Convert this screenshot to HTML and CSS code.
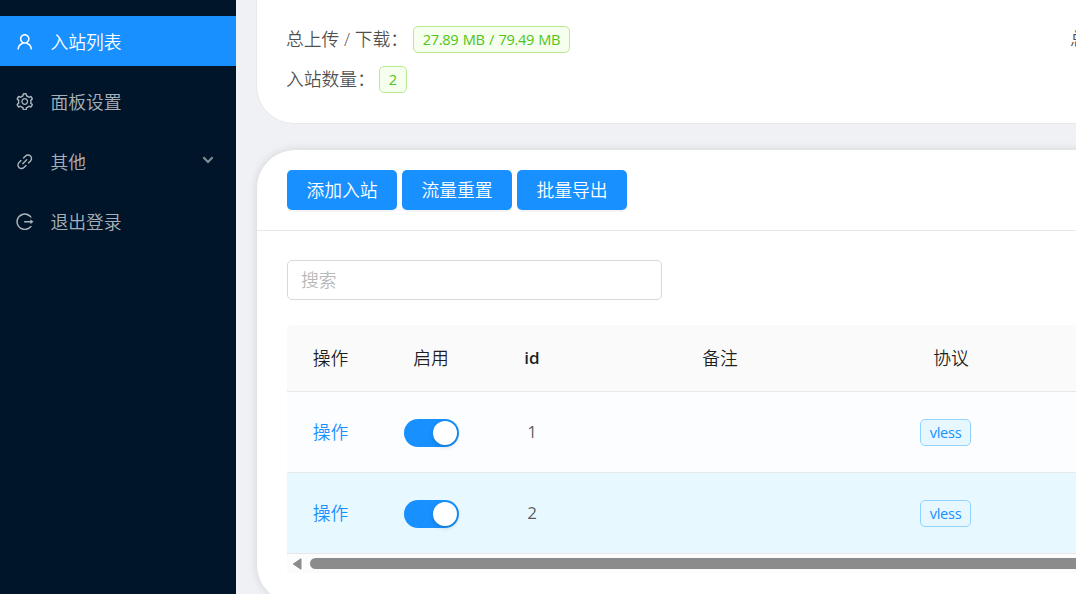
FILE: index.html
```html
<!DOCTYPE html>
<html lang="zh-CN">
<head>
<meta charset="utf-8">
<title>入站列表</title>
<link rel="stylesheet" href="styles.css">
</head>
<body>
<div class="layout">
  <nav class="sidebar">
    <a class="menu-item active">
      <svg class="icon" viewBox="64 64 896 896"><path d="M858.5 763.6a374 374 0 0 0-80.6-119.5 375.63 375.63 0 0 0-119.5-80.6c-.4-.2-.8-.3-1.2-.5C719.5 518 760 444.7 760 362c0-137-111-248-248-248S264 225 264 362c0 82.7 40.5 156 102.8 201.1-.4.2-.8.3-1.2.5-44.8 18.9-85 46-119.5 80.6a375.63 375.63 0 0 0-80.6 119.5A371.7 371.7 0 0 0 136 901.8a8 8 0 0 0 8 8.2h60c4.4 0 7.9-3.5 8-7.8 2-77.2 33-149.5 87.8-204.3 56.7-56.7 132-87.9 212.2-87.9s155.5 31.2 212.2 87.9C779 752.7 810 825 812 902.2c.1 4.4 3.6 7.8 8 7.8h60a8 8 0 0 0 8-8.2c-1-47.8-10.9-94.3-29.5-138.2zM512 534c-45.9 0-89.1-17.9-121.6-50.4S340 407.9 340 362c0-45.9 17.9-89.1 50.4-121.6S466.1 190 512 190s89.1 17.9 121.6 50.4S684 316.1 684 362c0 45.9-17.9 89.1-50.4 121.6S557.9 534 512 534z"/></svg>
      <span>入站列表</span>
    </a>
    <a class="menu-item">
      <svg class="icon" viewBox="64 64 896 896"><path d="M924.8 625.7l-65.5-56c3.1-19 4.7-38.4 4.7-57.8s-1.6-38.8-4.7-57.8l65.5-56a32.03 32.03 0 0 0 9.3-35.2l-.9-2.6a443.74 443.74 0 0 0-79.7-137.9l-1.8-2.1a32.12 32.12 0 0 0-35.1-9.5l-81.3 28.9c-30-24.6-63.5-44-99.7-57.6l-15.7-85a32.05 32.05 0 0 0-25.8-25.7l-2.7-.5c-52.1-9.4-106.9-9.4-159 0l-2.7.5a32.05 32.05 0 0 0-25.8 25.7l-15.8 85.4a351.86 351.86 0 0 0-99 57.4l-81.9-29.1a32 32 0 0 0-35.1 9.5l-1.8 2.1a446.02 446.02 0 0 0-79.7 137.9l-.9 2.6c-4.5 12.5-.8 26.5 9.3 35.2l66.3 56.6c-3.1 18.8-4.6 38-4.6 57.1 0 19.2 1.5 38.4 4.6 57.1L99 625.5a32.03 32.03 0 0 0-9.3 35.2l.9 2.6c18.1 50.4 44.9 96.9 79.7 137.9l1.8 2.1a32.12 32.12 0 0 0 35.1 9.5l81.9-29.1c29.8 24.5 63.1 43.9 99 57.4l15.8 85.4a32.05 32.05 0 0 0 25.8 25.7l2.7.5a449.4 449.4 0 0 0 159 0l2.7-.5a32.05 32.05 0 0 0 25.8-25.7l15.7-85a350 350 0 0 0 99.7-57.6l81.3 28.9a32 32 0 0 0 35.1-9.5l1.8-2.1c34.8-41.1 61.6-87.5 79.7-137.9l.9-2.6c4.5-12.3.8-26.3-9.3-35zM788.3 465.9c2.5 15.1 3.8 30.6 3.8 46.1s-1.3 31-3.8 46.1l-6.6 40.1 74.7 63.9a370.03 370.03 0 0 1-42.6 73.6L721 702.8l-31.4 25.8c-23.9 19.6-50.5 35-79.3 45.8l-38.1 14.3-17.9 97a377.5 377.5 0 0 1-85 0l-17.9-97.2-37.8-14.5c-28.5-10.8-55-26.2-78.7-45.7l-31.4-25.9-93.4 33.2c-17-22.9-31.2-47.6-42.6-73.6l75.5-64.5-6.5-40c-2.4-14.9-3.7-30.3-3.7-45.5 0-15.3 1.2-30.6 3.7-45.5l6.5-40-75.5-64.5c11.3-26.1 25.6-50.7 42.6-73.6l93.4 33.2 31.4-25.9c23.7-19.5 50.2-34.9 78.7-45.7l37.9-14.3 17.9-97.2c28.1-3.2 56.8-3.2 85 0l17.9 97 38.1 14.3c28.7 10.8 55.4 26.2 79.3 45.8l31.4 25.8 92.8-32.9c17 22.9 31.2 47.6 42.6 73.6L781.8 426l6.5 39.9zM512 326c-97.2 0-176 78.8-176 176s78.8 176 176 176 176-78.8 176-176-78.8-176-176-176zm79.2 255.2A111.6 111.6 0 0 1 512 614c-29.9 0-58-11.7-79.2-32.8A111.6 111.6 0 0 1 400 502c0-29.9 11.7-58 32.8-79.2C454 401.6 482.1 390 512 390c29.9 0 58 11.6 79.2 32.8A111.6 111.6 0 0 1 624 502c0 29.9-11.7 58-32.8 79.2z"/></svg>
      <span>面板设置</span>
    </a>
    <a class="menu-item">
      <svg class="icon" viewBox="64 64 896 896"><path d="M574 665.4a8.03 8.03 0 0 0-11.3 0L446.5 781.6c-53.8 53.8-144.6 59.5-204 0-59.5-59.5-53.8-150.2 0-204l116.2-116.2c3.1-3.1 3.1-8.2 0-11.3l-39.8-39.8a8.03 8.03 0 0 0-11.3 0L191.4 526.5c-84.6 84.6-84.6 221.5 0 306s221.5 84.6 306 0l116.2-116.2c3.1-3.1 3.1-8.2 0-11.3L574 665.4zm258.6-474c-84.6-84.6-221.5-84.6-306 0L410.3 307.6a8.03 8.03 0 0 0 0 11.3l39.7 39.7c3.1 3.1 8.2 3.1 11.3 0l116.2-116.2c53.8-53.8 144.6-59.5 204 0 59.5 59.5 53.8 150.2 0 204L665.3 562.6a8.03 8.03 0 0 0 0 11.3l39.8 39.8c3.1 3.1 8.2 3.1 11.3 0l116.2-116.2c84.5-84.6 84.5-221.5 0-306.1zM610.1 372.3a8.03 8.03 0 0 0-11.3 0L372.3 598.7a8.03 8.03 0 0 0 0 11.3l39.6 39.6c3.1 3.1 8.2 3.1 11.3 0l226.4-226.4c3.1-3.1 3.1-8.2 0-11.3l-39.5-39.6z"/></svg>
      <span>其他</span>
      <svg class="arrow" viewBox="0 0 12 8"><path d="M1.4 1.2L6 6L10.6 1.2"/></svg>
    </a>
    <a class="menu-item">
      <svg class="icon" viewBox="64 64 896 896"><path d="M868 732h-70.3c-4.8 0-9.3 2.1-12.3 5.8-7 8.5-14.5 16.7-22.4 24.5a353.84 353.84 0 0 1-112.7 75.9A352.8 352.8 0 0 1 512.4 866c-47.9 0-94.3-9.4-137.9-27.8a353.84 353.84 0 0 1-112.7-75.9 353.28 353.28 0 0 1-76-112.5C167.3 606.2 158 559.9 158 512s9.4-94.2 27.8-137.8c17.8-42.1 43.4-80 76-112.5s70.5-58.1 112.7-75.9c43.6-18.4 90-27.8 137.9-27.8 47.9 0 94.3 9.3 137.9 27.8 42.2 17.8 80.1 43.4 112.7 75.9 7.9 7.9 15.3 16.1 22.4 24.5 3 3.7 7.6 5.8 12.3 5.8H868c6.3 0 10.2-7 6.7-12.3C798 160.5 663.8 81.6 511.3 82 271.7 82.6 79.6 277.1 82 516.4 84.4 751.9 276.2 942 512.4 942c152.1 0 285.7-78.8 362.3-197.7 3.4-5.3-.4-12.3-6.7-12.3zm88.9-226.3L815 393.7c-5.3-4.2-13-.4-13 6.3v76H488c-4.4 0-8 3.6-8 8v56c0 4.4 3.6 8 8 8h314v76c0 6.7 7.8 10.5 13 6.3l141.9-112a8 8 0 0 0 0-12.6z"/></svg>
      <span>退出登录</span>
    </a>
  </nav>
  <main class="content">
    <section class="card summary">
      <div class="stats">
        <div class="stat"><span class="label-traffic">总上传 / 下载：</span><span class="tag green wide">27.89 MB / 79.49 MB</span></div>
        <div class="stat"><span class="label-count">入站数量：</span><span class="tag green">2</span></div>
      </div>
      <div class="stats"><div class="stat">总</div></div>
    </section>
    <section class="card list">
      <div class="toolbar">
        <button class="btn">添加入站</button>
        <button class="btn">流量重置</button>
        <button class="btn">批量导出</button>
      </div>
      <div class="card-body">
        <input class="search" type="text" placeholder="搜索">
        <div class="table">
          <div class="row head"><span>操作</span><span>启用</span><span class="latin">id</span><span>备注</span><span>协议</span></div>
          <div class="row"><a>操作</a><span><i class="switch"></i></span><span class="num">1</span><span></span><span><b class="tag blue">vless</b></span></div>
          <div class="row hover"><a>操作</a><span><i class="switch"></i></span><span class="num">2</span><span></span><span><b class="tag blue">vless</b></span></div>
          <div class="scrollbar">
            <svg class="scroll-left" viewBox="0 0 10 12"><path d="M9 .8V11.2L1.2 6z"/></svg>
            <div class="thumb"></div>
          </div>
        </div>
      </div>
    </section>
  </main>
</div>
</body>
</html>
```

FILE: styles.css
```css
* { box-sizing: border-box; }

body {
  margin: 0;
  overflow: hidden;
  background: #f0f2f5;
  color: rgba(0, 0, 0, 0.7);
  font: 350 17.8px/26px "Open Sans", "Noto Sans CJK SC", sans-serif;
}

.layout { display: flex; height: 594px; overflow: hidden; }

.sidebar {
  display: flex;
  flex: 0 0 236px;
  flex-direction: column;
  gap: 10px;
  padding-top: 16px;
  background: #001529;
}

.menu-item {
  display: flex;
  align-items: center;
  height: 50px;
  padding: 0 22px 0 16px;
  color: rgba(255, 255, 255, 0.68);
}
.menu-item.active { background: #1890ff; color: #fff; }
.menu-item span { padding-top: 1px; }

.icon { width: 17.5px; height: 17.5px; margin: 1px 17px 0 0; fill: currentColor; }

.arrow {
  width: 12px;
  height: 8px;
  margin: 0 0 2px auto;
  fill: none;
  stroke: currentColor;
  stroke-width: 2.2;
  opacity: 0.75;
}

.content {
  display: flex;
  flex: 1 0 auto;
  flex-direction: column;
  gap: 26px;
  width: 1300px;
  padding-left: 21px;
  background: #f0f1f5;
}

.card { flex: none; width: 1279px; background: #fff; }

.summary {
  display: grid;
  grid-template-columns: 784px 1fr;
  width: 1280px;
  height: 164px;
  margin: -40px 0 0 -1px;
  padding: 58px 30px 0 29px;
  border: 1px solid #e8e8e8;
  border-radius: 38px;
}

.stats { display: flex; flex-direction: column; }
.stat { display: flex; align-items: center; height: 40px; }
.stat > span:first-child { margin-top: -1px; }
.label-traffic { width: 127px; white-space: nowrap; }
.label-count { width: 93px; white-space: nowrap; }

.tag {
  display: inline-flex;
  align-items: center;
  justify-content: center;
  height: 27px;
  min-width: 28px;
  padding: 0 8px;
  border: 1px solid;
  border-radius: 5px;
  font-size: 14.6px;
  font-weight: 400;
  white-space: nowrap;
}
.tag.wide { width: 157px; letter-spacing: -0.35px; word-spacing: 1px; }
.green { border-color: #b7eb8f; background: #f6ffed; color: #52c41a; }
.blue { width: 51px; margin-right: 11px; border-color: #91d5ff; background: #e6f7ff; color: #1890ff; letter-spacing: -0.3px; }

.list {
  height: 453px;
  border-radius: 38px;
  box-shadow: 0 0 10px rgba(0, 0, 0, 0.13);
}

.toolbar {
  display: flex;
  gap: 5px;
  height: 81px;
  padding: 20px 30px;
  border-bottom: 1px solid #e8e8e8;
}

.btn {
  width: 110px;
  height: 40px;
  padding: 0;
  border: 0;
  border-radius: 5px;
  background: #1890ff;
  box-shadow: 0 2px 0 rgba(0, 0, 0, 0.045);
  color: #fff;
  font: inherit;
}

.card-body { padding: 29px 0 0 30px; }

.search {
  display: block;
  width: 375px;
  height: 40px;
  padding: 0 13px;
  border: 1px solid #d9d9d9;
  border-radius: 5px;
  font: inherit;
}
.search::placeholder { color: #b8b8b8; opacity: 1; }

.table { margin-top: 25px; border-radius: 5px 0 0 0; overflow: hidden; }

.row {
  display: grid;
  grid-template-columns: 87px 114px 88px 288px 174px;
  align-items: center;
  height: 81px;
  border-bottom: 1px solid #e8e8e8;
  background: #fcfdff;
  text-align: center;
}
.row > * { display: flex; align-items: center; justify-content: center; }
.row a { color: #1890ff; }
.row .num { color: rgba(0, 0, 0, 0.65); font-size: 17px; font-weight: 400; }
.head { height: 67px; background: #fafafa; color: rgba(0, 0, 0, 0.88); }
.head .latin { font-size: 17px; font-weight: 600; }
.row.hover { background: #e8f8ff; }

.switch {
  display: flex;
  justify-content: flex-end;
  width: 55px;
  height: 28px;
  margin-top: 2px;
  padding: 2px;
  border-radius: 14px;
  background: #1890ff;
}
.switch::after {
  content: "";
  width: 24px;
  height: 24px;
  border-radius: 50%;
  background: #fff;
  box-shadow: 0 2px 4px rgba(0, 35, 11, 0.2);
}

.scrollbar {
  display: flex;
  align-items: center;
  gap: 8px;
  height: 19px;
  padding-left: 5px;
  background: #fcfcfc;
}
.scroll-left {
  width: 10px;
  height: 12px;
  fill: #8b8b8b;
  stroke: #8b8b8b;
  stroke-linejoin: round;
}
.thumb { flex: 1; height: 11px; border-radius: 6px; background: #8b8b8b; }
```
